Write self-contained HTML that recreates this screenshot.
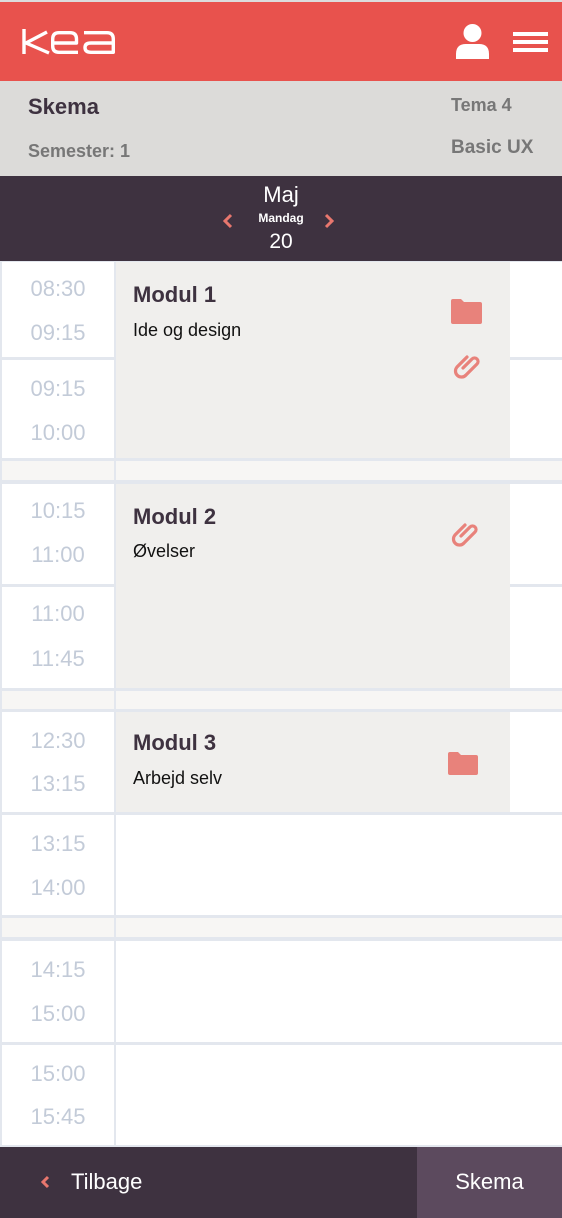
<!DOCTYPE html>
<html><head><meta charset="utf-8"><style>
*{margin:0;padding:0;box-sizing:border-box}
body{width:562px;height:1218px;position:relative;background:#e3e7ee;font-family:"Liberation Sans",sans-serif;overflow:hidden}
.a{position:absolute}
.cell{position:absolute;background:#fff}
.brk{position:absolute;background:#f7f6f4}
.t{position:absolute;left:2px;width:112px;text-align:center;color:#c3cbd8;font-size:22px}
.mod{position:absolute;left:116px;width:394px;background:#f0efed}
.mod h3{position:absolute;left:17px;font-size:22px;font-weight:bold;color:#3e3240}
.mod p{position:absolute;left:17px;font-size:18px;color:#111}
</style></head><body>
<div class="a" style="left:0;top:0;width:562px;height:2px;background:#dcdcdc"></div>
<div class="a" style="left:0;top:2px;width:562px;height:79px;background:#e8524d"></div>
<svg class="a" style="left:0;top:0" width="130" height="80"><g stroke="#fff" stroke-width="3.4" fill="none" stroke-linejoin="round">
<path d="M24 29 V54 M47 32 L26 43 L49 53"/>
<path d="M78 52.3 H59 Q52.7 52.3 52.7 46 V39 Q52.7 32.7 59 32.7 H70 Q76.5 32.7 76.5 39 V43 H53"/>
<path d="M84 32.7 H107 Q113.3 32.7 113.3 39 V52.3 H91 Q85 52.3 85 47.5 Q85 43 91 43 H113"/>
</g></svg>
<svg class="a" style="left:455px;top:24px" width="35" height="35" viewBox="0 0 35 35"><circle cx="17.5" cy="9" r="9" fill="#fff"/><path d="M1 35 V30 Q1 20 11 20 H24 Q34 20 34 30 V35 Z" fill="#fff"/></svg>
<div class="a" style="left:513px;top:32px;width:35px;height:4px;background:#fff"></div>
<div class="a" style="left:513px;top:40px;width:35px;height:4px;background:#fff"></div>
<div class="a" style="left:513px;top:48px;width:35px;height:4px;background:#fff"></div>
<div class="a" style="left:0;top:81px;width:562px;height:95px;background:#dcdbd9"></div>
<div class="a" style="left:28px;top:94px;font-size:22px;font-weight:bold;color:#3e3240">Skema</div>
<div class="a" style="left:28px;top:141px;font-size:18px;font-weight:bold;color:#777">Semester: 1</div>
<div class="a" style="left:451px;top:95px;font-size:18px;font-weight:bold;color:#777">Tema 4</div>
<div class="a" style="left:451px;top:137px;font-size:19px;font-weight:bold;color:#777">Basic UX</div>
<div class="a" style="left:0;top:176px;width:562px;height:85px;background:#3e3240"></div>
<div class="a" style="left:0;top:182px;width:562px;text-align:center;color:#fff;font-size:22px">Maj</div>
<div class="a" style="left:0;top:211px;width:562px;text-align:center;color:#fff;font-size:12px;font-weight:bold">Mandag</div>
<div class="a" style="left:0;top:230px;width:562px;text-align:center;color:#fff;font-size:21px">20</div>
<svg class="a" style="left:222px;top:213px" width="12" height="16"><path d="M9 2 L3 8 L9 14" stroke="#e8776e" stroke-width="3" fill="none"/></svg>
<svg class="a" style="left:323px;top:213px" width="12" height="16"><path d="M3 2 L9 8 L3 14" stroke="#e8776e" stroke-width="3" fill="none"/></svg>

<div class="cell" style="left:2px;top:262px;width:112px;height:95px"></div><div class="cell" style="left:116px;top:262px;width:446px;height:95px"></div>
<div class="cell" style="left:2px;top:360px;width:112px;height:98px"></div><div class="cell" style="left:116px;top:360px;width:446px;height:98px"></div>
<div class="brk" style="left:2px;top:461px;width:112px;height:19px"></div><div class="brk" style="left:116px;top:461px;width:446px;height:19px"></div>
<div class="cell" style="left:2px;top:484px;width:112px;height:100px"></div><div class="cell" style="left:116px;top:484px;width:446px;height:100px"></div>
<div class="cell" style="left:2px;top:587px;width:112px;height:101px"></div><div class="cell" style="left:116px;top:587px;width:446px;height:101px"></div>
<div class="brk" style="left:2px;top:691px;width:112px;height:18px"></div><div class="brk" style="left:116px;top:691px;width:446px;height:18px"></div>
<div class="cell" style="left:2px;top:712px;width:112px;height:100px"></div><div class="cell" style="left:116px;top:712px;width:446px;height:100px"></div>
<div class="cell" style="left:2px;top:815px;width:112px;height:100px"></div><div class="cell" style="left:116px;top:815px;width:446px;height:100px"></div>
<div class="brk" style="left:2px;top:918px;width:112px;height:19px"></div><div class="brk" style="left:116px;top:918px;width:446px;height:19px"></div>
<div class="cell" style="left:2px;top:941px;width:112px;height:101px"></div><div class="cell" style="left:116px;top:941px;width:446px;height:101px"></div>
<div class="cell" style="left:2px;top:1045px;width:112px;height:100px"></div><div class="cell" style="left:116px;top:1045px;width:446px;height:100px"></div>

<div class="t" style="top:276px">08:30</div><div class="t" style="top:320px">09:15</div>
<div class="t" style="top:376px">09:15</div><div class="t" style="top:420px">10:00</div>
<div class="t" style="top:498px">10:15</div><div class="t" style="top:542px">11:00</div>
<div class="t" style="top:601px">11:00</div><div class="t" style="top:646px">11:45</div>
<div class="t" style="top:728px">12:30</div><div class="t" style="top:771px">13:15</div>
<div class="t" style="top:831px">13:15</div><div class="t" style="top:875px">14:00</div>
<div class="t" style="top:957px">14:15</div><div class="t" style="top:1001px">15:00</div>
<div class="t" style="top:1061px">15:00</div><div class="t" style="top:1104px">15:45</div>

<div class="mod" style="top:262px;height:196px"><h3 style="top:20px">Modul 1</h3><p style="top:58px">Ide og design</p>
<svg class="a" style="left:335px;top:37px" width="31" height="25"><path d="M0 2 Q0 0 2 0 H10 L13 3 H29 Q31 3 31 5 V23 Q31 25 29 25 H2 Q0 25 0 23 Z" fill="#e8827b"/></svg>
<svg class="a" style="left:334px;top:86px" width="32" height="32" viewBox="0 0 32 32"><path d="M13 20 L22 11 A3.5 3.5 0 0 1 27 16 L16 27 A6 6 0 0 1 7 19 L17 9" stroke="#e8827b" stroke-width="3.2" fill="none" stroke-linecap="round"/></svg>
</div>
<div class="mod" style="top:484px;height:204px"><h3 style="top:20px">Modul 2</h3><p style="top:57px">Øvelser</p>
<svg class="a" style="left:332px;top:32px" width="32" height="32" viewBox="0 0 32 32"><path d="M13 20 L22 11 A3.5 3.5 0 0 1 27 16 L16 27 A6 6 0 0 1 7 19 L17 9" stroke="#e8827b" stroke-width="3.2" fill="none" stroke-linecap="round"/></svg>
</div>
<div class="mod" style="top:712px;height:100px"><h3 style="top:18px">Modul 3</h3><p style="top:56px">Arbejd selv</p>
<svg class="a" style="left:332px;top:40px" width="30" height="23"><path d="M0 2 Q0 0 2 0 H10 L13 3 H28 Q30 3 30 5 V21 Q30 23 28 23 H2 Q0 23 0 21 Z" fill="#e8827b"/></svg>
</div>

<div class="a" style="left:0;top:1147px;width:562px;height:71px;background:#3e3240"></div>
<div class="a" style="left:417px;top:1147px;width:145px;height:71px;background:#5c4a5e"></div>
<svg class="a" style="left:40px;top:1174px" width="12" height="16"><path d="M8 3 L3 8 L8 13" stroke="#e8776e" stroke-width="3" fill="none"/></svg>
<div class="a" style="left:71px;top:1169px;color:#fff;font-size:22px">Tilbage</div>
<div class="a" style="left:417px;top:1169px;width:145px;text-align:center;color:#fff;font-size:22px">Skema</div>
</body></html>
